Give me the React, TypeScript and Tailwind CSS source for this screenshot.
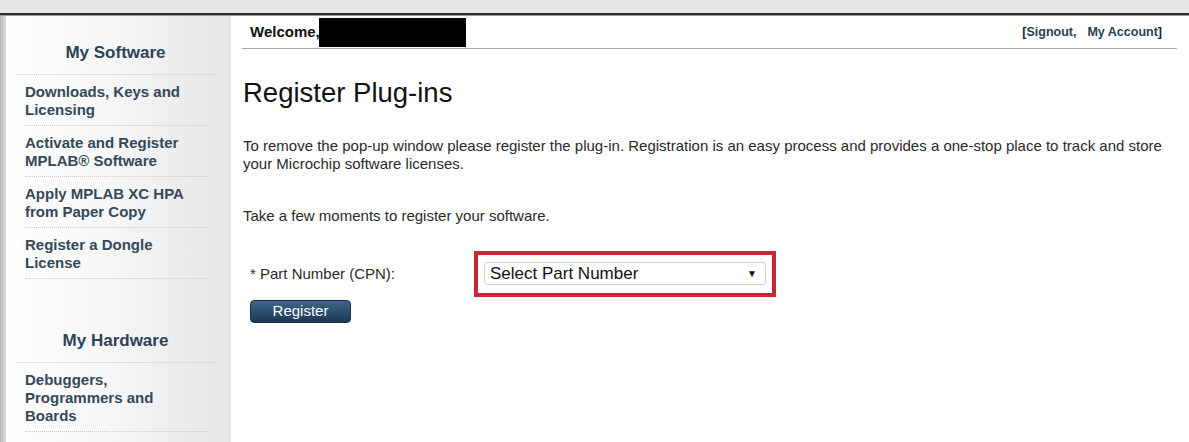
const softwareLinks = [
  ["Downloads, Keys and", "Licensing"],
  ["Activate and Register", "MPLAB® Software"],
  ["Apply MPLAB XC HPA", "from Paper Copy"],
  ["Register a Dongle", "License"],
];

const hardwareLinks = [["Debuggers,", "Programmers and", "Boards"], ["Production Programmers"]];

function SideItem({ lines, faded }: { lines: string[]; faded?: boolean }) {
  return (
    <li className="ml-[9px] mr-[8px] border-b border-dotted border-[#c9c9c9] pb-[6px] pt-[8px]">
      <a className={`block text-[15px] leading-[18px] font-bold ${faded ? "text-[#c4c9ce]" : "text-[#34495a]"}`}>
        {lines.map((l, i) => (
          <span key={i} className="block">
            {l}
          </span>
        ))}
      </a>
    </li>
  );
}

function SideHeading({ title, top }: { title: string; top: string }) {
  return (
    <h2 className={`${top} border-b border-dotted border-[#c9c9c9] pb-[11px] text-center text-[17px] leading-[20px] font-bold text-[#2e4355]`}>
      {title}
    </h2>
  );
}

export default function App() {
  return (
    <div className="flex h-[442px] flex-col overflow-hidden bg-white font-['Liberation_Sans',Arial,sans-serif]">
      {/* --- barre du navigateur --- */}
      <div className="h-[13px] shrink-0 bg-[#e6e6e6]" />
      <div className="h-[2px] shrink-0 bg-[#2f2f2f]" />
      <div className="h-[1px] shrink-0 bg-[#9a9a9a]" />

      <div className="flex min-h-0 flex-1">
        {/* bord gauche */}
        <div className="w-[6px] shrink-0 bg-gradient-to-r from-[#b9b9b9] to-[#dedede]" />

        {/* --- MENU LATÉRAL --- */}
        <aside className="w-[225px] shrink-0 bg-gradient-to-r from-white via-[#f5f5f5] to-[#e6e6e6] pl-[10px] pr-[16px]">
          <SideHeading title="My Software" top="mt-[27px]" />
          <ul>
            {softwareLinks.map((l, i) => (
              <SideItem key={i} lines={l} />
            ))}
          </ul>
          <SideHeading title="My Hardware" top="mt-[52px]" />
          <ul>
            {hardwareLinks.map((l, i) => (
              <SideItem key={i} lines={l} faded={i === 1} />
            ))}
          </ul>
        </aside>

        {/* --- CONTENU --- */}
        <main className="min-w-0 flex-1 pl-[11px] pr-[12px]">
          <header className="flex h-[33px] items-center justify-between border-b border-[#a9a9a9] pl-[8px] pr-[15px]">
            <div className="flex items-center">
              <span className="text-[15px] font-bold text-[#111]">Welcome,</span>
              <span className="ml-[-1px] mt-[1px] h-[29px] w-[147px] bg-black" />
            </div>
            <div className="text-[12.5px] font-bold text-[#2b3e50]">
              <span className="text-[#222]">[</span>
              <a>Signout,</a>
              <a className="ml-[11px]">My Account</a>
              <span className="text-[#222]">]</span>
            </div>
          </header>

          <div className="pl-[1px]">
            <h1 className="mt-[28px] text-[27.5px] leading-[32px] text-[#111]">Register Plug-ins</h1>

            <p className="mt-[28px] max-w-[922px] text-[15px] leading-[18px] text-[#2a2a2a]">
              To remove the pop-up window please register the plug-in. Registration is an easy process and provides a one-stop place to track and store your Microchip software licenses.
            </p>
            <p className="mt-[34px] text-[15px] leading-[18px] text-[#2a2a2a]">Take a few moments to register your software.</p>

            <div className="mt-[26px] flex items-center">
              <label className="w-[231px] pl-[7px] text-[15px] text-[#2a2a2a]">* Part Number (CPN):</label>
              <div className="w-[302px] border-[4px] border-[#c42a32] pb-[8px] pl-[6px] pr-[6px] pt-[7px]">
                <div className="flex h-[23px] items-center justify-between rounded-[3px] border border-[#d2d2d2] bg-white pl-[5px] pr-[8px]">
                  <span className="text-[17px] text-[#111]">Select Part Number</span>
                  <span className="text-[10px] text-[#111]">▼</span>
                </div>
              </div>
            </div>

            <button className="ml-[7px] mt-[3px] flex h-[23px] w-[101px] items-center justify-center rounded-[4px] border border-[#173149] bg-gradient-to-b from-[#3f6689] to-[#1b3855] text-[15px] text-white">
              Register
            </button>
          </div>
        </main>
      </div>
    </div>
  );
}
